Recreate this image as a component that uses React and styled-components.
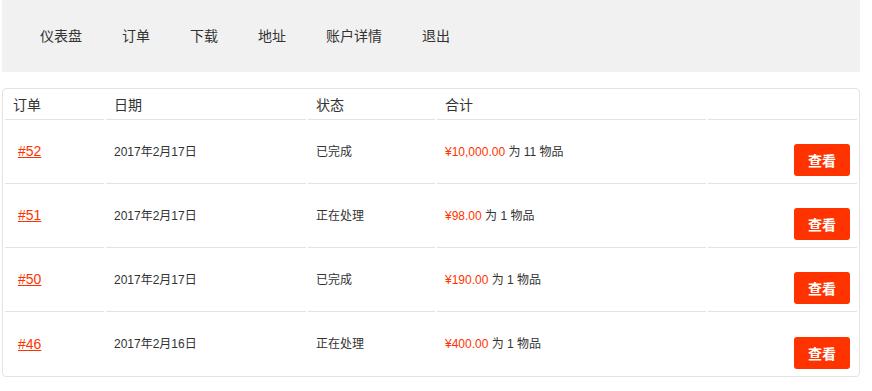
import React from "react";
import styled, { createGlobalStyle } from "styled-components";

const Global = createGlobalStyle`
  html, body { margin: 0; padding: 0; background: #fff; }
  body { font-family: "Liberation Sans", Arial, "Noto Sans CJK SC", sans-serif; color: #333; }
`;

const Page = styled.div`
  padding: 0 12px 0 2px;
  width: 858px;
`;

const Nav = styled.nav`
  display: flex;
  align-items: center;
  height: 72px;
  background: #f1f1f1;
  padding-left: 18px;
`;

const NavItem = styled.a`
  padding: 0 20px;
  font-size: 14px;
  color: #333;
  text-decoration: none;
  line-height: 20px;
`;

const Card = styled.div`
  margin-top: 16px;
  border: 1px solid #e3e3e3;
  border-radius: 4px;
  box-sizing: border-box;
  width: 858px;
`;

const Table = styled.table`
  width: 100%;
  border-collapse: separate;
  border-spacing: 2px 0;
  table-layout: fixed;
`;

const Th = styled.th`
  box-sizing: border-box;
  height: 31px;
  padding: 0 8px;
  font-size: 14px;
  font-weight: normal;
  text-align: left;
  vertical-align: middle;
  border-bottom: 1px solid #e3e3e3;
`;

const Td = styled.td`
  box-sizing: border-box;
  height: 64px;
  padding: 0 8px;
  font-size: 12px;
  vertical-align: ${(p) => (p.$action ? "bottom" : "middle")};
  text-align: ${(p) => (p.$action ? "right" : "left")};
  border-bottom: ${(p) => (p.$last ? "none" : "1px solid #e3e3e3")};
  padding-bottom: ${(p) => (p.$action ? "7px" : "0")};
  padding-right: ${(p) => (p.$action ? "7px" : "8px")};
  line-height: 16px;
`;

const OrderLink = styled.a`
  margin-left: 5px;
  font-size: 14px;
  color: #ff3300;
  text-decoration: underline;
`;

const Price = styled.span`
  color: #ff3300;
`;

const ViewButton = styled.button`
  width: 56px;
  height: 32px;
  border: none;
  border-radius: 3px;
  background: #ff3300;
  color: #fff;
  font-family: inherit;
  font-size: 14px;
  font-weight: bold;
  padding: 0;
  cursor: pointer;
  vertical-align: bottom;
`;

const orders = [
  { id: "#52", date: "2017年2月17日", status: "已完成", price: "¥10,000.00", qty: "11" },
  { id: "#51", date: "2017年2月17日", status: "正在处理", price: "¥98.00", qty: "1" },
  { id: "#50", date: "2017年2月17日", status: "已完成", price: "¥190.00", qty: "1" },
  { id: "#46", date: "2017年2月16日", status: "正在处理", price: "¥400.00", qty: "1" },
];

export default function App() {
  return (
    <Page>
      <Global />
      <Nav>
        {["仪表盘", "订单", "下载", "地址", "账户详情", "退出"].map((t) => (
          <NavItem key={t} href="#">{t}</NavItem>
        ))}
      </Nav>
      <Card>
        <Table>
          <colgroup>
            <col style={{ width: 99 }} />
            <col style={{ width: 200 }} />
            <col style={{ width: 127 }} />
            <col style={{ width: 269 }} />
            <col />
          </colgroup>
          <thead>
            <tr>
              <Th>订单</Th>
              <Th>日期</Th>
              <Th>状态</Th>
              <Th>合计</Th>
              <Th></Th>
            </tr>
          </thead>
          <tbody>
            {orders.map((o, i) => {
              const last = i === orders.length - 1;
              return (
                <tr key={o.id}>
                  <Td $last={last}><OrderLink href="#">{o.id}</OrderLink></Td>
                  <Td $last={last}>{o.date}</Td>
                  <Td $last={last}>{o.status}</Td>
                  <Td $last={last}><Price>{o.price}</Price> 为 {o.qty} 物品</Td>
                  <Td $last={last} $action><ViewButton>查看</ViewButton></Td>
                </tr>
              );
            })}
          </tbody>
        </Table>
      </Card>
    </Page>
  );
}
